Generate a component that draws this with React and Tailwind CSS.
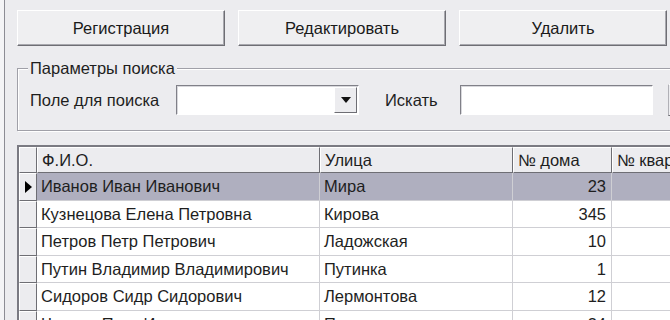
const rows = [
  { fio: 'Иванов Иван Иванович', street: 'Мира', house: '23', h: 'h-[28px]' },
  { fio: 'Кузнецова Елена Петровна', street: 'Кирова', house: '345', h: 'h-[27px]' },
  { fio: 'Петров Петр Петрович', street: 'Ладожская', house: '10', h: 'h-[28px]' },
  { fio: 'Путин Владимир Владимирович', street: 'Путинка', house: '1', h: 'h-[27px]' },
  { fio: 'Сидоров Сидр Сидорович', street: 'Лермонтова', house: '12', h: 'h-[28px]' },
  { fio: 'Чапаев Петр Иванович', street: 'Пушкина', house: '34', h: 'h-[27px]' },
]

function Btn({ children }) {
  return (
    <button className="h-[36px] w-[208px] shrink-0 border border-t-white border-l-white border-b-[#6e6e74] border-r-[#6e6e74] bg-[#efeff1] text-[16.5px] text-[#1a1a1a] shadow-[inset_-1px_-1px_0_#a8a8ae]">
      {children}
    </button>
  )
}

export default function App() {
  return (
    <div
      className="flex h-[320px] w-[670px] overflow-hidden bg-[#f3f3f5] text-[#1e1e1e]"
      style={{ fontFamily: '"Liberation Sans", Arial, sans-serif' }}
    >
      <div className="w-[4px] shrink-0 bg-[#f4f4f6]" />
      <div className="w-px shrink-0 bg-[#8c8c94]" />
      <div className="flex min-w-0 flex-1 flex-col bg-[#ececef] pl-[12px]">
        {/* buttons */}
        <div className="mt-[10px] flex gap-[13px]">
          <Btn>Регистрация</Btn>
          <Btn>Редактировать</Btn>
          <Btn>Удалить</Btn>
        </div>

        {/* search group */}
        <div className="relative mt-[22px] h-[63px] w-[700px] shrink-0 border border-[#a0a0a8] shadow-[1px_1px_0_#ffffff,inset_1px_1px_0_#ffffff]">
          <span className="absolute -top-[11px] left-[10px] bg-[#ececef] px-[2px] text-[16.5px] leading-[20px]">Параметры поиска</span>
          <div className="flex items-center pt-[15px]">
            <span className="ml-[12px] w-[146px] text-[16.5px]">Поле для поиска</span>
            <div className="flex h-[30px] w-[183px] border border-t-[#808088] border-l-[#808088] border-b-white border-r-white bg-white shadow-[inset_1px_1px_0_#d8d8dc]">
              <div className="flex-1" />
              <div className="my-[1px] mr-[1px] flex w-[23px] items-center justify-center border border-t-white border-l-white border-b-[#6e6e74] border-r-[#6e6e74] bg-[#ececef]">
                <svg width="10" height="6" viewBox="0 0 10 6"><path d="M0 0h10L5 6z" fill="#111" /></svg>
              </div>
            </div>
            <span className="ml-[26px] w-[75px] text-[16.5px]">Искать</span>
            <div className="h-[30px] w-[193px] border border-t-[#808088] border-l-[#808088] border-b-white border-r-white bg-white shadow-[inset_1px_1px_0_#d8d8dc]" />
            <div className="ml-[15px] h-[32px] w-[20px] border border-t-white border-l-[#b0b0b6] border-b-[#6e6e74] bg-[#ececef]" />
          </div>
        </div>

        {/* grid */}
        <div className="mt-[14px] w-[700px] border-t-2 border-l-2 border-t-[#7a7a82] border-l-[#7a7a82] bg-white text-[16.5px]">
          <div className="flex h-[26px] bg-[#ececef]">
            <div className="w-[18px] shrink-0 border border-t-white border-l-white border-r-[#6e6e74] border-b-[#6e6e74]" />
            <div className="flex w-[283px] shrink-0 items-center border border-t-white border-l-white border-r-[#6e6e74] border-b-[#6e6e74] pl-[4px]">Ф.И.О.</div>
            <div className="flex w-[193px] shrink-0 items-center border border-t-white border-l-white border-r-[#6e6e74] border-b-[#6e6e74] pl-[4px]">Улица</div>
            <div className="flex w-[99px] shrink-0 items-center border border-t-white border-l-white border-r-[#6e6e74] border-b-[#6e6e74] pl-[4px]">№ дома</div>
            <div className="flex w-[120px] shrink-0 items-center border border-t-white border-l-white border-r-[#6e6e74] border-b-[#6e6e74] pl-[4px]">№ квартиры</div>
          </div>
          {rows.map(function (r, i) {
            const sel = i === 0
            const bg = sel ? 'bg-[#afafbf]' : 'bg-white'
            return (
              <div key={i} className={'flex ' + r.h}>
                <div className="flex w-[18px] shrink-0 items-center justify-center border border-t-white border-l-white border-r-[#6e6e74] border-b-[#6e6e74] bg-[#ececef]">
                  {sel ? <svg width="7" height="12" viewBox="0 0 7 12"><path d="M0 0l7 6-7 6z" fill="#000" /></svg> : null}
                </div>
                <div className={'flex w-[283px] shrink-0 items-center border-r border-b border-[#cfcfd4] pl-[4px] ' + bg}>{r.fio}</div>
                <div className={'flex w-[193px] shrink-0 items-center border-r border-b border-[#cfcfd4] pl-[4px] ' + bg}>{r.street}</div>
                <div className={'flex w-[99px] shrink-0 items-center justify-end border-r border-b border-[#cfcfd4] pr-[5px] ' + bg}>{r.house}</div>
                <div className={'w-[120px] shrink-0 border-r border-b border-[#cfcfd4] ' + bg} />
              </div>
            )
          })}
        </div>
      </div>
    </div>
  )
}
